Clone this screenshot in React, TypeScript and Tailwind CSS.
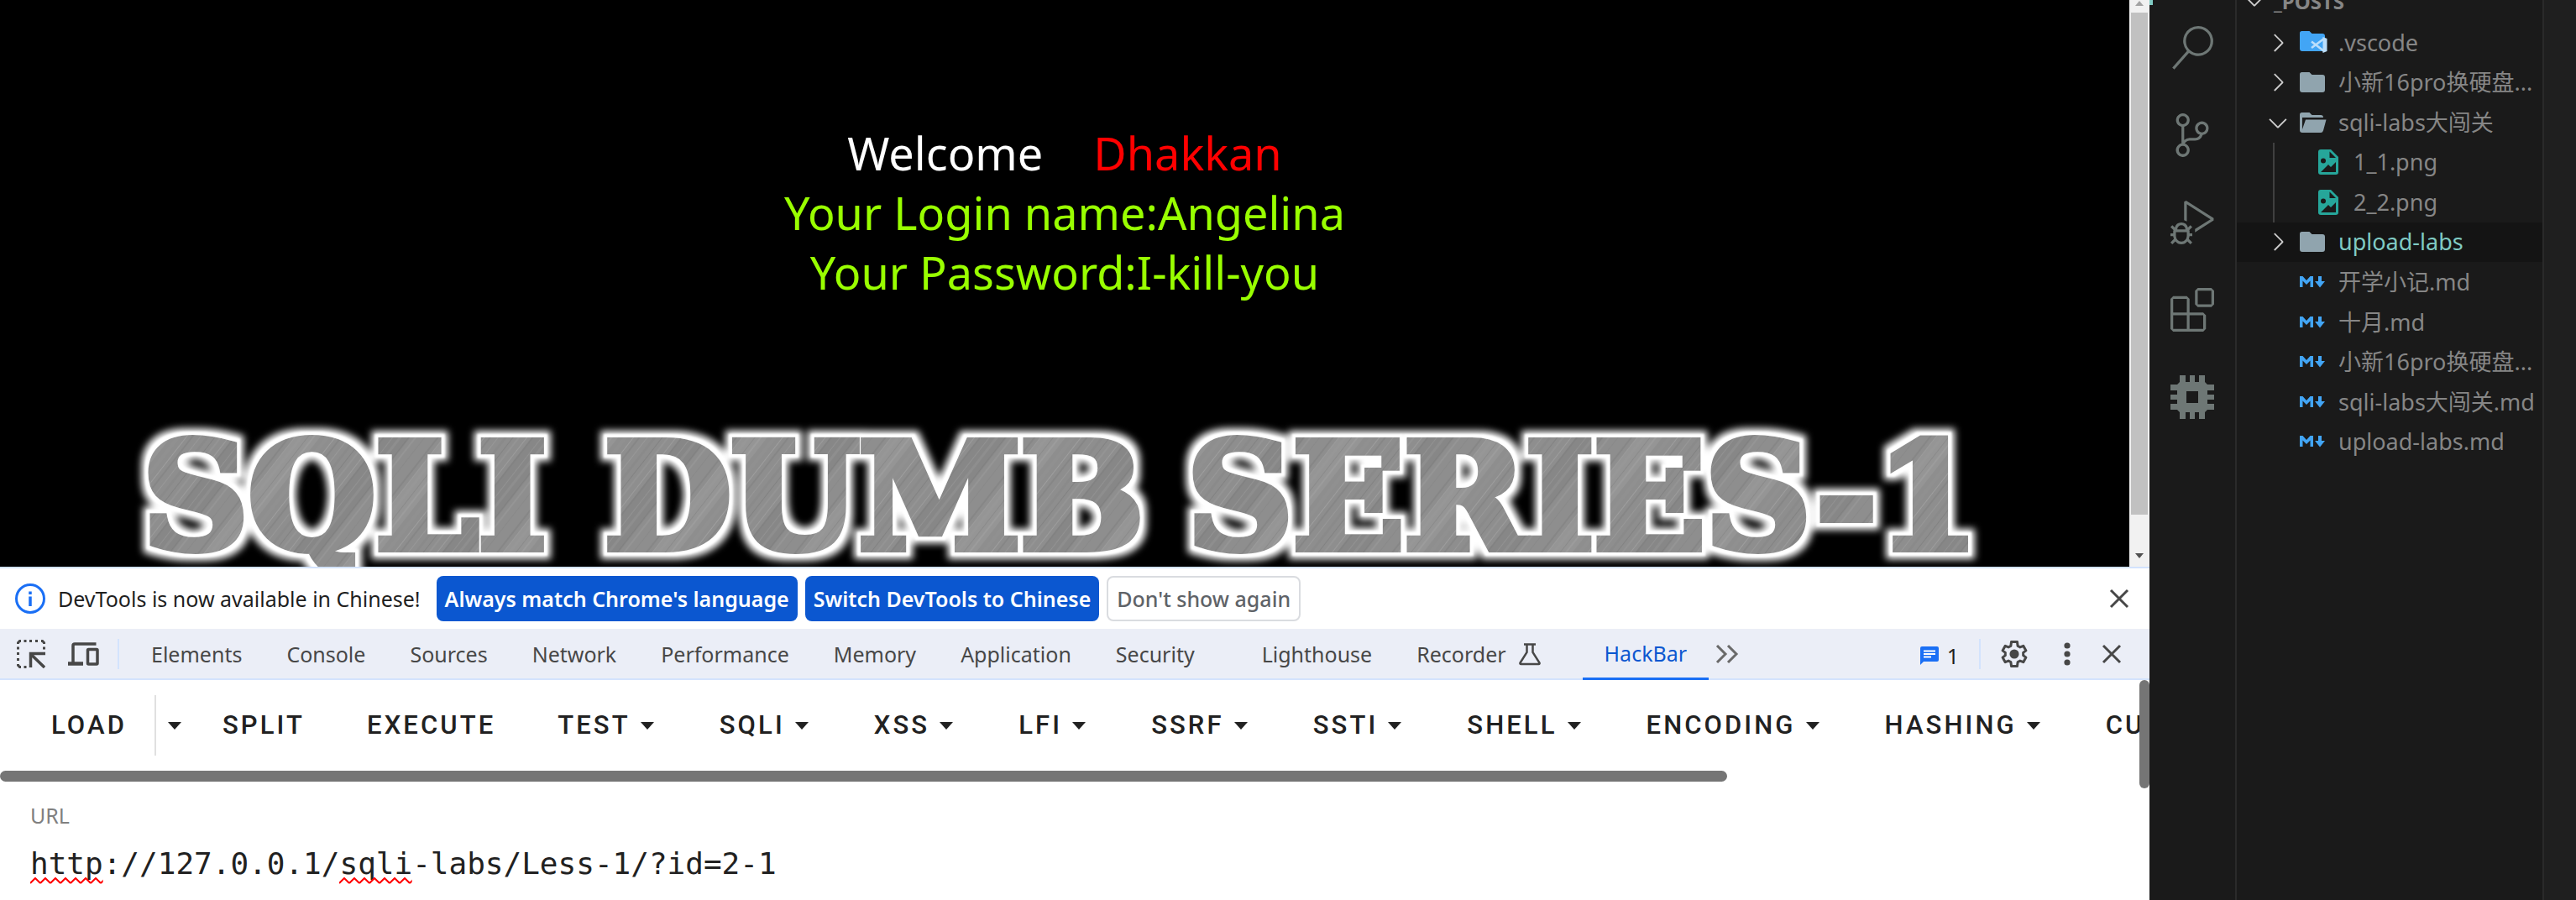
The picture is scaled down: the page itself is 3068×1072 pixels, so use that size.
import type { ReactNode } from "react";
import {
  VscChevronDown,
  VscChevronRight,
  VscDebugAlt,
  VscExtensions,
  VscSearch,
  VscSourceControl,
} from "react-icons/vsc";

const STREAKS = [
  [3, 2, "#6f6f6f"], [9, 1, "#c4c4c4"], [14, 3, "#9c9c9c"], [21, 1, "#666"], [26, 2, "#b0b0b0"],
  [33, 1, "#777"], [38, 4, "#989898"], [47, 1, "#d0d0d0"], [52, 2, "#707070"], [60, 1, "#b8b8b8"],
  [66, 3, "#808080"], [74, 1, "#606060"], [79, 2, "#a8a8a8"], [87, 1, "#c8c8c8"], [92, 2, "#757575"],
  [101, 1, "#b4b4b4"], [107, 3, "#a2a2a2"], [116, 1, "#6a6a6a"], [122, 2, "#acacac"], [131, 1, "#7a7a7a"],
] as const;

const WORDS = [
  { text: "SQLI", x: 170 },
  { text: "DUMB", x: 720 },
  { text: "SERIES-1", x: 1414 },
];

function Banner() {
  return (
    <svg viewBox="0 0 2536 175" className="block w-full shrink-0 overflow-visible" role="img" aria-label="SQLI DUMB SERIES-1">
      <defs>
        <pattern id="metal" width="140" height="140" patternUnits="userSpaceOnUse" patternTransform="rotate(38)">
          <rect width="140" height="140" fill="#8e8e8e" />
          <rect x="10" width="24" height="140" fill="#a0a0a0" opacity="0.4" />
          <rect x="92" width="26" height="140" fill="#7c7c7c" opacity="0.35" />
          {STREAKS.map(([x, w, c]) => (
            <rect key={x} x={x} width={w} height="140" fill={c} opacity="0.25" />
          ))}
        </pattern>
        <filter id="halo" x="0" y="0" width="2536" height="200" filterUnits="userSpaceOnUse">
          <feMorphology in="SourceAlpha" operator="dilate" radius="8" result="wide" />
          <feGaussianBlur in="wide" stdDeviation="4" result="soft" />
          <feMorphology in="SourceAlpha" operator="dilate" radius="4" result="tight" />
          <feGaussianBlur in="tight" stdDeviation="1" result="edge" />
          <feFlood floodColor="#fff" result="white" />
          <feComposite in="white" in2="soft" operator="in" result="glow" />
          <feComposite in="white" in2="edge" operator="in" result="rim" />
          <feMerge>
            <feMergeNode in="glow" />
            <feMergeNode in="rim" />
            <feMergeNode in="SourceGraphic" />
          </feMerge>
        </filter>
      </defs>
      <g
        filter="url(#halo)"
        fill="url(#metal)"
        stroke="url(#metal)"
        strokeWidth="10"
        fontFamily='"DejaVu Serif", serif'
        fontWeight="700"
        fontSize="174"
      >
        {WORDS.map((w) => (
          <text key={w.text} x={w.x} y="153">
            {w.text}
          </text>
        ))}
      </g>
    </svg>
  );
}

function Caret() {
  return (
    <svg viewBox="0 0 16 9" className="h-[9px] w-4 shrink-0" fill="currentColor" aria-hidden="true">
      <path d="M0 0h16L8 9z" />
    </svg>
  );
}

function Cross() {
  return (
    <svg viewBox="0 0 24 24" className="size-6" fill="none" stroke="currentColor" strokeWidth="3" aria-hidden="true">
      <path d="M2 2l20 20M22 2L2 22" />
    </svg>
  );
}

function InspectIcon() {
  return (
    <svg viewBox="0 0 34 34" className="size-[34px]" fill="none" stroke="currentColor" strokeWidth="3" aria-hidden="true">
      <path d="M1.500 5V3.500l2-2H5M8.500 1.500h3M15 1.500h3M22 1.500h3M29 1.500h1.500l2 2V5M32.500 8.500v3M1.500 8.500v3M1.500 15v3M1.500 22v3M1.500 29v1.500l2 2H5M8.500 32.500h3" />
      <path d="M16.500 33V16.500H34M17 17.500L33 33" strokeWidth="3.500" />
    </svg>
  );
}

function DevicesIcon() {
  return (
    <svg viewBox="0 0 38 30" className="h-[30px] w-[38px]" fill="none" stroke="currentColor" strokeWidth="3.500" aria-hidden="true">
      <path d="M34.500 3H9a2 2 0 0 0-2 2v21" />
      <path d="M1 26.500h18" strokeWidth="4.500" />
      <rect x="24.500" y="9.500" width="11.500" height="17.500" rx="1" />
    </svg>
  );
}

function FlaskIcon() {
  return (
    <svg viewBox="0 0 28 28" className="mr-[22px] size-7" fill="none" stroke="currentColor" strokeWidth="2.500" aria-hidden="true">
      <path d="M7 2.500h14M10.500 3v9L2.500 24.500q-.5 1.500 1 1.500h21q1.500 0 1-1.500L17.500 12V3" />
    </svg>
  );
}

function GearIcon() {
  return (
    <svg viewBox="0 0 24 24" className="size-[38px]" aria-hidden="true">
      <path
        fill="none"
        stroke="currentColor"
        strokeWidth="1.900"
        strokeLinejoin="round"
        d="M18.700 13c.1-.6.1-1.400 0-2l2.100-1.600-2-3.500-2.500 1c-.5-.4-1.100-.7-1.700-1L14.200 2.800H9.800L9.400 5.900c-.6.3-1.200.6-1.700 1l-2.500-1-2 3.500L5.300 11c-.1.600-.1 1.400 0 2l-2.100 1.600 2 3.500 2.500-1c.5.400 1.100.7 1.700 1l.4 3.100h4.400l.4-3.100c.6-.3 1.200-.6 1.700-1l2.500 1 2-3.500z"
      />
      <circle cx="12" cy="12" r="3.500" fill="currentColor" />
    </svg>
  );
}

const TABS: { name: string; wide?: boolean; flask?: boolean; active?: boolean }[] = [
  { name: "Elements" },
  { name: "Console" },
  { name: "Sources" },
  { name: "Network" },
  { name: "Performance" },
  { name: "Memory" },
  { name: "Application" },
  { name: "Security", wide: true },
  { name: "Lighthouse" },
  { name: "Recorder", flask: true },
  { name: "HackBar", active: true },
];

const MENUS = ["TEST", "SQLI", "XSS", "LFI", "SSRF", "SSTI", "SHELL", "ENCODING", "HASHING", "CUSTOM"];

function ToolButton({ split, children }: { split?: boolean; children: ReactNode }) {
  return (
    <button
      className={
        split
          ? "flex shrink-0 items-center pr-[33px] pl-9 text-[31px] leading-9 font-medium tracking-widest"
          : "flex shrink-0 items-center gap-3 pr-[38px] pl-9 text-[31px] leading-9 font-medium tracking-widest"
      }
    >
      {children}
    </button>
  );
}

function Squiggle() {
  return (
    <svg className="h-2 w-[4ch] shrink-0" aria-hidden="true">
      <defs>
        <pattern id="wave" width="12" height="8" patternUnits="userSpaceOnUse">
          <path d="M0 7L6 1l6 6" fill="none" stroke="#f00" strokeWidth="2" />
        </pattern>
      </defs>
      <rect width="100%" height="8" fill="url(#wave)" />
    </svg>
  );
}

function Page() {
  return (
    <section className="flex h-[63vh] shrink-0 bg-black">
      <div className="flex min-w-0 flex-1 flex-col justify-between overflow-hidden">
        <div className="pt-[147px] text-center text-[54px] leading-[71px] text-[#99ff00]">
          <p>
            <span className="mr-[60px] text-white">Welcome</span>
            <span className="text-[#ff0000]">Dhakkan</span>
          </p>
          <p>Your Login name:Angelina</p>
          <p>Your Password:I-kill-you</p>
        </div>
        <Banner />
      </div>
      <div className="flex w-6 shrink-0 flex-col items-center bg-[#f1f1f1]">
        <svg viewBox="0 0 10 6" className="mt-px mb-2 h-[6px] w-[10px] shrink-0" fill="#a3a3a3" aria-hidden="true">
          <path d="M0 6h10L5 0z" />
        </svg>
        <div className="mb-[46px] w-5 flex-1 bg-[#c1c1c1]" />
        <svg viewBox="0 0 10 6" className="mb-[10px] h-[6px] w-[10px] shrink-0" fill="#505050" aria-hidden="true">
          <path d="M0 0h10L5 6z" />
        </svg>
      </div>
    </section>
  );
}

function DevTools() {
  return (
    <section className="relative flex flex-1 flex-col bg-white text-[25px] leading-9 text-[#1f1f1f]">
      <div className="flex h-[74px] shrink-0 items-center gap-[9px] border-t-2 border-[#d3e3fd] pr-6 pl-[18px]">
        <svg viewBox="0 0 36 36" className="size-9" fill="none" stroke="#1a6ff5" strokeWidth="3" aria-hidden="true">
          <circle cx="18" cy="18" r="16.500" />
          <path d="M18 15.500V27M18 9.500V13" strokeWidth="3.500" />
        </svg>
        <span className="mr-2.5 ml-1.5">DevTools is now available in Chinese!</span>
        <button className="h-[54px] rounded-lg bg-[#0b57d0] px-[10px] font-semibold text-white">
          Always match Chrome's language
        </button>
        <button className="h-[54px] rounded-lg bg-[#0b57d0] px-[10px] font-semibold text-white">
          Switch DevTools to Chinese
        </button>
        <button className="h-[54px] rounded-lg border-2 border-[#dadce0] px-[10px] font-medium text-[#5f6368]">
          Don't show again
        </button>
        <button aria-label="Close infobar" className="ml-auto text-[#474747]">
          <Cross />
        </button>
      </div>

      <div className="flex h-[61px] shrink-0 items-stretch border-b-2 border-[#d3e3fd] bg-[#ebeef7] text-[#474747]">
        <button aria-label="Inspect element" className="ml-5">
          <InspectIcon />
        </button>
        <button aria-label="Toggle device toolbar" className="mr-[22px] ml-[26px]">
          <DevicesIcon />
        </button>
        <div className="mr-3 h-9 w-0.5 self-center bg-[#d3e3fd]" />
        {TABS.map((t) => (
          <button
            key={t.name}
            className={
              t.active
                ? "-mb-0.5 flex shrink-0 items-center border-b-[3px] border-[#1a6ff5] px-[26px] text-[#0b57d0]"
                : t.wide
                  ? "flex shrink-0 items-center pr-[54px] pl-[26px]"
                  : "flex shrink-0 items-center gap-3.5 pr-[27px] pl-[26px]"
            }
          >
            {t.name}
            {t.flask && <FlaskIcon />}
          </button>
        ))}
        <button aria-label="More tabs" className="ml-2 text-[#6a6a6a]">
          <svg viewBox="0 0 28 22" className="h-[22px] w-7" fill="none" stroke="currentColor" strokeWidth="3" aria-hidden="true">
            <path d="M2 1l10 10L2 21M15 1l10 10-10 10" />
          </svg>
        </button>
        <button className="mr-[24px] ml-auto flex items-center gap-2.5 pt-1 text-[#1f1f1f]">
          <svg viewBox="0 0 22 22" className="size-[22px]" aria-hidden="true">
            <path fill="#1a6ff5" d="M2 0h18a2 2 0 0 1 2 2v14a2 2 0 0 1-2 2H4l-4 4V2a2 2 0 0 1 2-2z" />
            <path d="M4 5.500h14M4 9h14M4 12.500h9" stroke="#fff" strokeWidth="1.800" />
          </svg>
          1
        </button>
        <div className="h-9 w-0.5 self-center bg-[#d3e3fd]" />
        <button aria-label="Settings" className="ml-[21px]">
          <GearIcon />
        </button>
        <button aria-label="More options" className="ml-[39px]">
          <svg viewBox="0 0 10 28" className="h-7 w-2.5" fill="currentColor" aria-hidden="true">
            <circle cx="5" cy="4" r="3.600" />
            <circle cx="5" cy="14" r="3.600" />
            <circle cx="5" cy="24" r="3.600" />
          </svg>
        </button>
        <button aria-label="Close DevTools" className="mr-[33px] ml-9">
          <Cross />
        </button>
      </div>

      <div className="relative flex flex-1 flex-col">
        <div className="flex h-[108px] shrink-0 items-stretch overflow-hidden pt-[18px] pb-[18px] pl-[25px] font-[Roboto,sans-serif] text-[#212121]">
          <ToolButton split>LOAD</ToolButton>
          <button aria-label="Load options" className="flex w-[45px] shrink-0 items-center justify-center border-l-2 border-[#e0e0e0]">
            <Caret />
          </button>
          <ToolButton>SPLIT</ToolButton>
          <ToolButton>EXECUTE</ToolButton>
          {MENUS.map((m) => (
            <ToolButton key={m}>
              {m}
              <span className="mr-1">
                <Caret />
              </span>
            </ToolButton>
          ))}
        </div>
        <div className="h-[13px] w-[2057px] max-w-full shrink-0 rounded-full bg-[#757575]" />
        <div className="flex flex-col pt-[22px] pl-9">
          <label htmlFor="url" className="text-[#808080]">
            URL
          </label>
          <div className="relative mt-4 font-['DejaVu_Sans_Mono',monospace] text-[36px] leading-[48px]">
            <input
              id="url"
              className="block w-full bg-transparent text-[#212121] outline-none"
              spellCheck={false}
              defaultValue="http://127.0.0.1/sqli-labs/Less-1/?id=2-1"
            />
            <div className="pointer-events-none absolute bottom-0 left-0 flex gap-[13ch]">
              <Squiggle />
              <Squiggle />
            </div>
          </div>
        </div>
        <div className="absolute top-0 right-0 h-[129px] w-3 rounded-full bg-[#757575]" />
      </div>
    </section>
  );
}

function FolderIcon() {
  return (
    <svg viewBox="0 0 30 24" className="h-6 w-[30px] shrink-0" fill="#90a4ae" aria-hidden="true">
      <path d="M2.500 0h9l3 3H27a3 3 0 0 1 3 3v15a3 3 0 0 1-3 3H3a3 3 0 0 1-3-3V2.500A2.500 2.500 0 0 1 2.500 0z" />
    </svg>
  );
}

function FolderOpenIcon() {
  return (
    <svg viewBox="0 0 32 24" className="h-6 w-8 shrink-0" fill="#90a4ae" aria-hidden="true">
      <path d="M2.500 0h9l3 3H25q3 0 3 3H3v14L7 8.500h24.500L28 21.500Q27.200 24 25 24H3a3 3 0 0 1-3-3V2.500A2.500 2.500 0 0 1 2.500 0z" />
    </svg>
  );
}

function VscodeFolderIcon() {
  return (
    <svg viewBox="0 0 34 27" className="h-[27px] w-[34px] shrink-0" aria-hidden="true">
      <path fill="#42a5f5" d="M2.500 0h9l3 3H27a3 3 0 0 1 3 3v15a3 3 0 0 1-3 3H3a3 3 0 0 1-3-3V2.500A2.500 2.500 0 0 1 2.500 0z" />
      <path fill="none" stroke="#bbdefb" strokeWidth="2.600" d="M14 12.500L29 24M14 20L29 9" />
      <path fill="#bbdefb" d="M27.500 7l5 2v15l-5 2z" />
    </svg>
  );
}

function ImageFileIcon() {
  return (
    <svg viewBox="0 0 24 30" className="h-[30px] w-6 shrink-0" aria-hidden="true">
      <path fill="#26a69a" d="M3 0h12l9 9v18a3 3 0 0 1-3 3H3a3 3 0 0 1-3-3V3a3 3 0 0 1 3-3z" />
      <path fill="#1a1a1a" d="M13.500 2.500V10H21z" />
      <circle cx="6" cy="13.500" r="3" fill="#1a1a1a" />
      <path fill="#1a1a1a" d="M3 27l9-9 3 3 6-6v12z" />
    </svg>
  );
}

function MarkdownIcon() {
  return (
    <svg viewBox="0 0 30 14" className="h-3.5 w-[30px] shrink-0" fill="#42a5f5" aria-hidden="true">
      <path d="M0 13V0h3.500L8 5l4.500-5H16v13h-3.500V5.500L8 10 3.500 5.500V13z" />
      <path d="M22 0h4v6h4l-6 7.500L18 6h4z" />
    </svg>
  );
}

type Entry = { name: string; kind: "vscode" | "folder" | "open" | "image" | "md"; selected?: boolean };

const ENTRIES: Entry[] = [
  { name: ".vscode", kind: "vscode" },
  { name: "小新16pro换硬盘...", kind: "folder" },
  { name: "sqli-labs大闯关", kind: "open" },
  { name: "1_1.png", kind: "image" },
  { name: "2_2.png", kind: "image" },
  { name: "upload-labs", kind: "folder", selected: true },
  { name: "开学小记.md", kind: "md" },
  { name: "十月.md", kind: "md" },
  { name: "小新16pro换硬盘...", kind: "md" },
  { name: "sqli-labs大闯关.md", kind: "md" },
  { name: "upload-labs.md", kind: "md" },
];

function Row({ entry }: { entry: Entry }) {
  if (entry.kind === "image") {
    return (
      <li className="flex items-stretch pl-[43px]">
        <span className="w-0.5 bg-[#404040]" />
        <button className="ml-[52px] flex items-center gap-[18px]">
          <ImageFileIcon />
          {entry.name}
        </button>
      </li>
    );
  }
  return (
    <li className={entry.selected ? "flex bg-[#141414] pl-8 text-[#80cbc4]" : "flex pl-8"}>
      <button className="flex items-center">
        <span className="flex w-[43px] text-[#cccccc]">
          {entry.kind === "open" && <VscChevronDown className="size-[34px]" />}
          {(entry.kind === "folder" || entry.kind === "vscode") && <VscChevronRight className="size-[34px]" />}
        </span>
        <span className="flex w-[46px]">
          {entry.kind === "vscode" && <VscodeFolderIcon />}
          {entry.kind === "folder" && <FolderIcon />}
          {entry.kind === "open" && <FolderOpenIcon />}
          {entry.kind === "md" && <MarkdownIcon />}
        </span>
        <span className="whitespace-nowrap">{entry.name}</span>
      </button>
    </li>
  );
}

function ChipIcon() {
  return (
    <svg viewBox="0 0 52 52" className="size-[52px]" fill="currentColor" aria-hidden="true">
      <path d="M11 0h7v8h5V0h6v8h5V0h7v8l3 3h8v7h-8v5h8v6h-8v5h8v7h-8l-3 3v8h-7v-8h-5v8h-6v-8h-5v8h-7v-8l-3-3H0v-7h8v-5H0v-6h8v-5H0v-7h8l3-3zM19 19v14h14V19z" fillRule="evenodd" />
    </svg>
  );
}

function Editor() {
  return (
    <aside className="flex w-[508px] shrink-0 bg-[#1a1a1a]">
      <nav className="relative flex w-[104px] shrink-0 flex-col items-center gap-[52px] border-r-2 border-[#2a2a2a] pt-[31px] text-[#6e7775]">
        <span className="absolute top-0 left-0 h-1.5 w-1 bg-[#80cbc4]" />
        <button aria-label="Search"><VscSearch className="size-[52px]" /></button>
        <button aria-label="Source control"><VscSourceControl className="size-[52px]" /></button>
        <button aria-label="Run and debug"><VscDebugAlt className="size-[52px]" /></button>
        <button aria-label="Extensions"><VscExtensions className="size-[52px]" /></button>
        <button aria-label="Embedded tools"><ChipIcon /></button>
      </nav>
      <div className="min-w-0 flex-1 overflow-hidden text-[27px] leading-9 text-[#868686]">
        <button className="-mt-4 flex h-[43px] items-start gap-1.5 pl-1 text-[24px] leading-9 font-bold">
          <VscChevronDown className="size-[34px] text-[#cccccc]" />
          _POSTS
        </button>
        <ul className="grid h-[523px] auto-rows-fr">
          {ENTRIES.map((e) => (
            <Row key={e.name + e.kind} entry={e} />
          ))}
        </ul>
      </div>
      <div className="w-10 shrink-0 border-l-2 border-[#2a2a2a] bg-[#1f1f1f]" />
    </aside>
  );
}

export default function App() {
  return (
    <div className="flex min-h-screen w-full overflow-hidden bg-[#1a1a1a] font-['Noto_Sans','Noto_Sans_CJK_SC',sans-serif]">
      <main className="flex min-w-0 flex-1 flex-col">
        <Page />
        <DevTools />
      </main>
      <Editor />
    </div>
  );
}
